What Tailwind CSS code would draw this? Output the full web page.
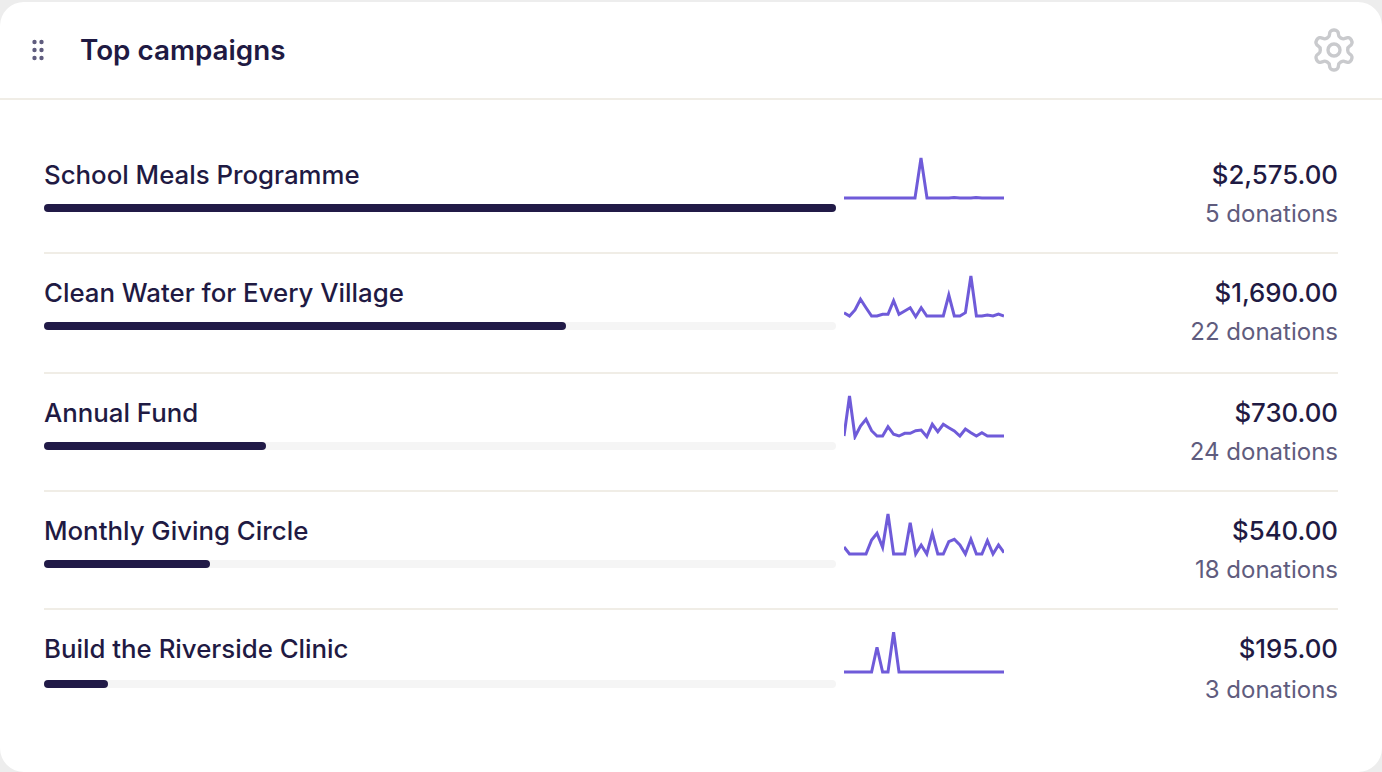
<!DOCTYPE html>
<html lang="en">
  <head>
    <meta charset="UTF-8" />
    <title>Top campaigns</title>
    <script src="https://cdn.jsdelivr.net/npm/@tailwindcss/browser@4"></script>
  </head>

  <body class="bg-[#ededed] font-['Inter',sans-serif] text-[#1f1a43]">
    <div class="h-[772px] pt-[2px]">
      <div class="h-[770px] bg-white rounded-[24px] overflow-hidden">
        <div class="h-[98px] flex items-center border-b-2 border-[#f0ede6] pl-[31px] pr-[24px]">
          <svg class="w-[15px] h-[22px] text-[#5f5c7e]" viewBox="0 0 15 22" fill="currentColor">
            <circle cx="3.5" cy="3" r="2.2" />
            <circle cx="10.5" cy="3" r="2.2" />
            <circle cx="3.5" cy="11" r="2.2" />
            <circle cx="10.5" cy="11" r="2.2" />
            <circle cx="3.5" cy="19" r="2.2" />
            <circle cx="10.5" cy="19" r="2.2" />
          </svg>
          <p class="ml-[34px] text-[27.8px] font-semibold leading-8">Top campaigns</p>
          <svg class="ml-auto w-[48px] h-[48px] text-[#c9cacd]" viewBox="0 0 24 24" fill="none" stroke="currentColor" stroke-width="1.7" stroke-linecap="round" stroke-linejoin="round">
            <path d="M12.22 2h-.44a2 2 0 0 0-2 2v.18a2 2 0 0 1-1 1.73l-.43.25a2 2 0 0 1-2 0l-.15-.08a2 2 0 0 0-2.73.73l-.22.38a2 2 0 0 0 .73 2.73l.15.1a2 2 0 0 1 1 1.72v.51a2 2 0 0 1-1 1.74l-.15.09a2 2 0 0 0-.73 2.73l.22.38a2 2 0 0 0 2.73.73l.15-.08a2 2 0 0 1 2 0l.43.25a2 2 0 0 1 1 1.73V20a2 2 0 0 0 2 2h.44a2 2 0 0 0 2-2v-.18a2 2 0 0 1 1-1.73l.43-.25a2 2 0 0 1 2 0l.15.08a2 2 0 0 0 2.73-.73l.22-.39a2 2 0 0 0-.73-2.73l-.15-.08a2 2 0 0 1-1-1.74v-.5a2 2 0 0 1 1-1.74l.15-.09a2 2 0 0 0 .73-2.73l-.22-.38a2 2 0 0 0-2.73-.73l-.15.08a2 2 0 0 1-2 0l-.43-.25a2 2 0 0 1-1-1.73V4a2 2 0 0 0-2-2z" />
            <circle cx="12" cy="12" r="3" />
          </svg>
        </div>

        <div class="pt-[33px] px-[44px]">
          <div class="h-[119px] flex items-start border-t-2 border-transparent">
            <div class="w-[792px]">
              <p class="pt-6 text-[25.8px] font-medium leading-8">School Meals Programme</p>
              <div class="mt-[13px] h-2 rounded-full bg-[#f5f5f5]">
                <div class="h-2 rounded-full bg-[#211a47] w-full"></div>
              </div>
            </div>
            <svg class="ml-2 mt-[19px] w-[160px] h-[48px] text-[#6f5bd9]" viewBox="0 0 160 48" fill="none" stroke="currentColor" stroke-width="3">
              <polyline points="0,44 71,44 77,4 83,44 105,44 110,43.6 116,44 127,44 132,43.6 138,44 160,44" />
            </svg>
            <div class="flex-1 text-right">
              <p class="pt-6 text-[25.8px] font-medium leading-8">$2,575.00</p>
              <p class="mt-[7px] text-[24px] leading-8 text-[#5f5c7e]">5 donations</p>
            </div>
          </div>

          <div class="h-[120px] flex items-start border-t-2 border-[#f0ede6]">
            <div class="w-[792px]">
              <p class="pt-[23px] text-[25.8px] font-medium leading-8">Clean Water for Every Village</p>
              <div class="mt-[13px] h-2 rounded-full bg-[#f5f5f5]">
                <div class="h-2 rounded-full bg-[#211a47] w-[522px]"></div>
              </div>
            </div>
            <svg class="ml-2 mt-[18px] w-[160px] h-[48px] text-[#6f5bd9]" viewBox="0 0 160 48" fill="none" stroke="currentColor" stroke-width="3">
              <polyline points="0,40.7 5.5,44 11,38 16.5,27.3 22,35.7 27.6,44 33,44 38.6,42.3 44,42.3 49.6,28.7 55,42.3 60.7,39 66.2,35.7 71.7,44.7 77.2,35.7 82.8,44 88.3,44 93.8,44 99.3,44 104.8,23 110.3,44 115.9,44 121.4,40.7 126.9,4 132.4,44 137.9,44 143.4,43 149,44 154.5,42 160,44" />
            </svg>
            <div class="flex-1 text-right">
              <p class="pt-[23px] text-[25.8px] font-medium leading-8">$1,690.00</p>
              <p class="mt-[7px] text-[24px] leading-8 text-[#5f5c7e]">22 donations</p>
            </div>
          </div>

          <div class="h-[118px] flex items-start border-t-2 border-[#f0ede6]">
            <div class="w-[792px]">
              <p class="pt-[23px] text-[25.8px] font-medium leading-8">Annual Fund</p>
              <div class="mt-[13px] h-2 rounded-full bg-[#f5f5f5]">
                <div class="h-2 rounded-full bg-[#211a47] w-[222px]"></div>
              </div>
            </div>
            <svg class="ml-2 mt-[18px] w-[160px] h-[48px] text-[#6f5bd9]" viewBox="0 0 160 48" fill="none" stroke="currentColor" stroke-width="3">
              <polyline points="0,44 5.5,4 11,44.7 16.5,34 22,27.3 27.6,38.7 33,44 38.6,44 44,34.7 49.6,42.3 55,44 60.7,41.3 66.2,41.3 71.7,38.7 77.2,38 82.8,44.7 88.3,32.3 93.8,39.7 99.3,32.3 104.8,35.7 110.3,39 115.9,44 121.4,37 126.9,40.7 132.4,44 137.9,40.7 143.4,44 149,44 154.5,44 160,44" />
            </svg>
            <div class="flex-1 text-right">
              <p class="pt-[23px] text-[25.8px] font-medium leading-8">$730.00</p>
              <p class="mt-[7px] text-[24px] leading-8 text-[#5f5c7e]">24 donations</p>
            </div>
          </div>

          <div class="h-[118px] flex items-start border-t-2 border-[#f0ede6]">
            <div class="w-[792px]">
              <p class="pt-[23px] text-[25.8px] font-medium leading-8">Monthly Giving Circle</p>
              <div class="mt-[13px] h-2 rounded-full bg-[#f5f5f5]">
                <div class="h-2 rounded-full bg-[#211a47] w-[166px]"></div>
              </div>
            </div>
            <svg class="ml-2 mt-[18px] w-[160px] h-[48px] text-[#6f5bd9]" viewBox="0 0 160 48" fill="none" stroke="currentColor" stroke-width="3">
              <polyline points="0,37 5.5,44 11,44 16.5,44 22,44 27.6,30 33,23.3 38.6,37.3 44,4 49.6,44 55,44 60.7,44 66.2,12.7 71.7,44 77.2,35 82.8,44 88.3,23.3 93.8,44 99.3,44 104.8,31.7 110.3,29.3 115.9,35 121.4,44 126.9,29.3 132.4,44 137.9,44 143.4,30.7 149,44 154.5,35 160,42.7" />
            </svg>
            <div class="flex-1 text-right">
              <p class="pt-[23px] text-[25.8px] font-medium leading-8">$540.00</p>
              <p class="mt-[7px] text-[24px] leading-8 text-[#5f5c7e]">18 donations</p>
            </div>
          </div>

          <div class="h-[118px] flex items-start border-t-2 border-[#f0ede6]">
            <div class="w-[792px]">
              <p class="pt-[23px] text-[25.8px] font-medium leading-8">Build the Riverside Clinic</p>
              <div class="mt-[15px] h-2 rounded-full bg-[#f5f5f5]">
                <div class="h-2 rounded-full bg-[#211a47] w-[64px]"></div>
              </div>
            </div>
            <svg class="ml-2 mt-[18px] w-[160px] h-[48px] text-[#6f5bd9]" viewBox="0 0 160 48" fill="none" stroke="currentColor" stroke-width="3">
              <polyline points="0,44 27.6,44 33,19.3 38.6,44 44,44 49.6,4.3 55,44 160,44" />
            </svg>
            <div class="flex-1 text-right">
              <p class="pt-[23px] text-[25.8px] font-medium leading-8">$195.00</p>
              <p class="mt-[9px] text-[24px] leading-8 text-[#5f5c7e]">3 donations</p>
            </div>
          </div>
        </div>
      </div>
    </div>
  </body>
</html>
